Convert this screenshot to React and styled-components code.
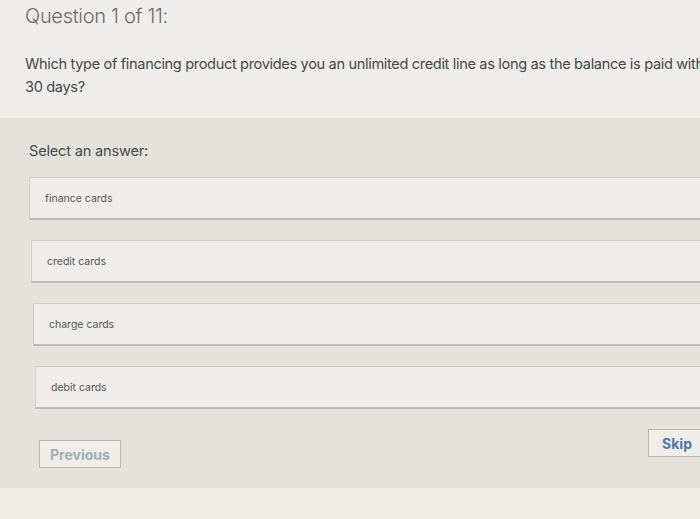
import React from "react";
import styled, { createGlobalStyle } from "styled-components";

const Global = createGlobalStyle`
  html, body { margin: 0; padding: 0; }
  body {
    width: 700px; height: 519px; overflow: hidden;
    background: #eeece8;
    font-family: Inter, "Liberation Sans", sans-serif;
  }
`;

const Page = styled.div`
  width: 700px;
  height: 519px;
  display: flex;
  flex-direction: column;
  overflow: hidden;
`;

const Header = styled.div`
  background: #efede9;
  padding: 4px 0 0 25px;
  height: 118px;
  box-sizing: border-box;
  overflow: hidden;
`;

const Title = styled.h1`
  margin: 0;
  font-size: 20px;
  font-weight: 300;
  color: #6a6a6a;
  letter-spacing: -0.3px;
`;

const QuestionText = styled.p`
  margin: 25px 0 0;
  font-size: 14.6px;
  line-height: 23px;
  color: #474747;
  white-space: nowrap;
  letter-spacing: -0.35px;
`;

const Body = styled.div`
  background: #e4e2dd;
  height: 370px;
  padding: 24px 0 0 29px;
  box-sizing: border-box;
  display: flex;
  flex-direction: column;
`;

const SelectLabel = styled.div`
  font-size: 14.6px;
  color: #4a4a4a;
  margin-bottom: 17px;
  letter-spacing: -0.2px;
`;

const Answers = styled.div`
  display: flex;
  flex-direction: column;
  gap: 20px;
`;

const Answer = styled.div`
  margin-left: ${(p) => p.$shift}px;
  margin-right: -10px;
  height: 43px;
  box-sizing: border-box;
  background: #efede9;
  border: 1px solid #cfcdc9;
  border-bottom: 2px solid #bdbbb7;
  display: flex;
  align-items: center;
  padding-left: 15px;
  font-size: 10.5px;
  color: #565656;
`;

const Footer = styled.div`
  display: flex;
  justify-content: space-between;
  align-items: flex-start;
  margin-top: 20px;
  padding-left: 10px;
`;

const Button = styled.div`
  margin-top: ${(p) => p.$top}px;
  margin-right: ${(p) => p.$right || 0}px;
  height: 28px;
  box-sizing: border-box;
  padding: 0 ${(p) => p.$pad}px;
  display: flex;
  align-items: center;
  border: 1px solid #b9b9b4;
  background: #efede9;
  font-size: 14px;
  font-weight: 700;
  color: ${(p) => p.$color};
`;

const Bottom = styled.div`
  flex: 1;
  background: #efede8;
`;

const answers = ["finance cards", "credit cards", "charge cards", "debit cards"];

export default function App() {
  return (
    <Page>
      <Global />
      <Header>
        <Title>Question 1 of 11:</Title>
        <QuestionText>
          Which type of financing product provides you an unlimited credit line as long as the balance is paid within
          <br />
          30 days?
        </QuestionText>
      </Header>
      <Body>
        <SelectLabel>Select an answer:</SelectLabel>
        <Answers>
          {answers.map((a, i) => (
            <Answer key={a} $shift={i * 2}>
              {a}
            </Answer>
          ))}
        </Answers>
        <Footer>
          <Button $top={11} $pad={10} $color="#9fadb5">Previous</Button>
          <Button $top={0} $pad={13} $right={-6} $color="#4b79ab">Skip</Button>
        </Footer>
      </Body>
      <Bottom />
    </Page>
  );
}
